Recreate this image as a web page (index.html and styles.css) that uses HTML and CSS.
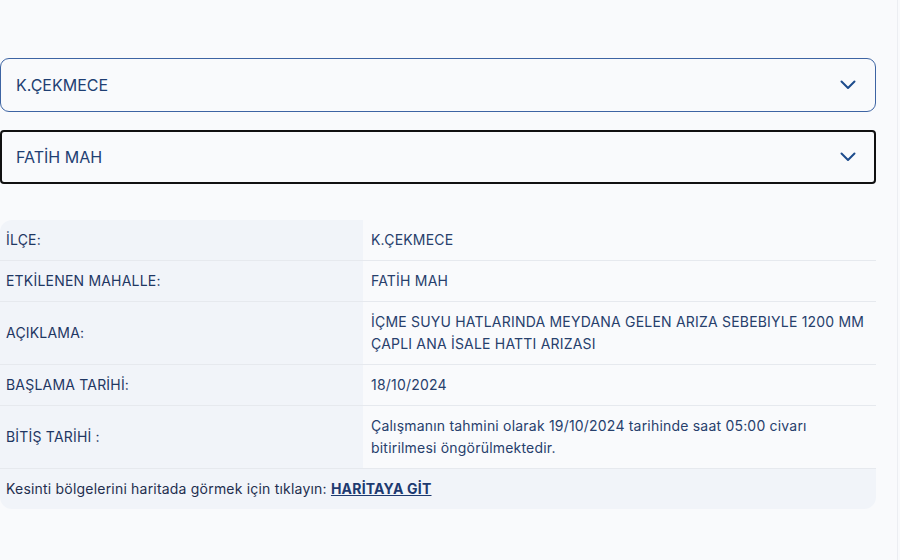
FILE: index.html
```html
<!DOCTYPE html>
<html lang="tr">

<head>
    <meta charset="UTF-8">
    <meta name="viewport" content="width=device-width, initial-scale=1.0">
    <title>Arıza Kesinti Sorgulama</title>
    <link rel="stylesheet" href="styles.css">
</head>

<body>
    <div class="page">
        <div class="filters">
            <div class="select-box">
                <span>K.ÇEKMECE</span>
                <svg class="chevron" width="16" height="10" viewBox="0 0 16 10">
                    <path d="M1.5 1.5 L8 8 L14.5 1.5" fill="none" stroke="#1d4b8c" stroke-width="2" stroke-linecap="round" stroke-linejoin="round" />
                </svg>
            </div>
            <div class="select-box active">
                <span>FATİH MAH</span>
                <svg class="chevron" width="16" height="10" viewBox="0 0 16 10">
                    <path d="M1.5 1.5 L8 8 L14.5 1.5" fill="none" stroke="#1d4b8c" stroke-width="2" stroke-linecap="round" stroke-linejoin="round" />
                </svg>
            </div>
        </div>

        <table class="outage-table">
            <tbody>
                <tr>
                    <th>İLÇE:</th>
                    <td>K.ÇEKMECE</td>
                </tr>
                <tr>
                    <th>ETKİLENEN MAHALLE:</th>
                    <td>FATİH MAH</td>
                </tr>
                <tr>
                    <th>AÇIKLAMA:</th>
                    <td>İÇME SUYU HATLARINDA MEYDANA GELEN ARIZA SEBEBIYLE 1200 MM ÇAPLI ANA İSALE HATTI ARIZASI</td>
                </tr>
                <tr>
                    <th>BAŞLAMA TARİHİ:</th>
                    <td>18/10/2024</td>
                </tr>
                <tr>
                    <th>BİTİŞ TARİHİ :</th>
                    <td>Çalışmanın tahmini olarak 19/10/2024 tarihinde saat 05:00 civarı bitirilmesi öngörülmektedir.</td>
                </tr>
                <tr class="map-row">
                    <td colspan="2">Kesinti bölgelerini haritada görmek için tıklayın: <a href="#">HARİTAYA GİT</a></td>
                </tr>
            </tbody>
        </table>
    </div>
</body>

</html>
```

FILE: styles.css
```css
body {
    margin: 0;
    padding: 0;
    background-color: #f9fafc;
    font-family: Inter, "Open Sans", sans-serif;
    color: #1f3763;
}

.page {
    width: 876px;
    padding-top: 58px;
    min-height: 502px;
    border-right: 1px solid #eceef2;
    padding-right: 21px;
}

/* dropdowns */
.filters {
    display: flex;
    flex-direction: column;
    gap: 18px;
}

.select-box {
    height: 54px;
    box-sizing: border-box;
    display: flex;
    align-items: center;
    justify-content: space-between;
    padding: 0 19px 0 15px;
    border: 1px solid #3d64a3;
    border-radius: 9px;
    font-size: 16px;
    color: #1f3f73;
}

.select-box.active {
    border: 2px solid #111;
    border-radius: 4px;
    padding-left: 14px;
    padding-right: 18px;
}

.chevron {
    display: block;
}

/* details */
.outage-table {
    width: 100%;
    margin-top: 36px;
    border-collapse: separate;
    border-spacing: 0;
    font-size: 14px;
    letter-spacing: 0.2px;
}

.outage-table th,
.outage-table td {
    text-align: left;
    font-weight: normal;
    padding: 9px 7px 9px 6px;
    line-height: 22px;
    border-bottom: 1px solid #e6e9ee;
}

.outage-table th {
    width: 350px;
    background-color: #f1f4f9;
    color: #1f3763;
}

.outage-table td {
    padding-left: 8px;
    color: #27406c;
}

.outage-table tr:first-child th {
    border-top-left-radius: 12px;
}

.map-row td {
    padding: 9px 6px;
    background-color: #f1f4f9;
    border-bottom: none;
    border-radius: 0 0 12px 12px;
    color: #1f2f4f;
}

.map-row a {
    color: #1d3a70;
    font-weight: bold;
    text-decoration: underline;
}
```
